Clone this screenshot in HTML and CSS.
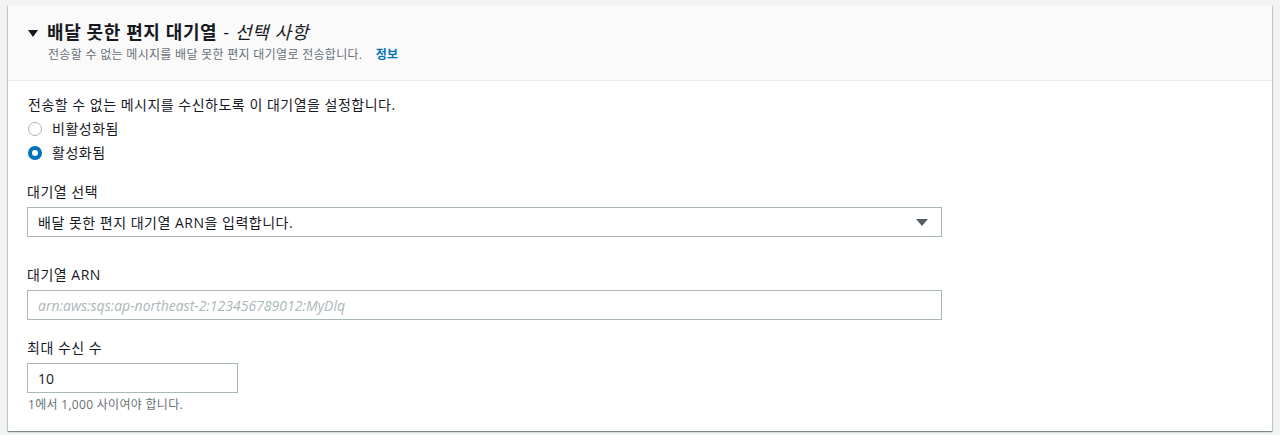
FILE: index.html
```html
<!DOCTYPE html>
<html lang="ko">
<head>
    <meta charset="utf-8">
    <title>배달 못한 편지 대기열</title>
    <link rel="stylesheet" href="styles.css">
</head>
<body>
    <div class="panel">
        <div class="panel-header">
            <h2>
                <span class="caret"></span>
                배달 못한 편지 대기열 <span class="optional">- <i>선택 사항</i></span>
            </h2>
            <p class="desc">전송할 수 없는 메시지를 배달 못한 편지 대기열로 전송합니다. <a href="#" class="info">정보</a></p>
        </div>
        <div class="panel-body">
            <p class="intro">전송할 수 없는 메시지를 수신하도록 이 대기열을 설정합니다.</p>
            <label class="radio"><span class="dot"></span>비활성화됨</label>
            <label class="radio"><span class="dot checked"></span>활성화됨</label>

            <div class="field first">
                <label class="field-label">대기열 선택</label>
                <div class="select">
                    <span>배달 못한 편지 대기열 ARN을 입력합니다.</span>
                    <span class="select-caret"></span>
                </div>
            </div>

            <div class="field arn">
                <label class="field-label">대기열 ARN</label>
                <input type="text" class="text wide" placeholder="arn:aws:sqs:ap-northeast-2:123456789012:MyDlq">
            </div>

            <div class="field count">
                <label class="field-label">최대 수신 수</label>
                <input type="text" class="text narrow" value="10">
                <p class="hint">1에서 1,000 사이여야 합니다.</p>
            </div>
        </div>
    </div>
</body>
</html>
```

FILE: styles.css
```css
body {
    margin: 0;
    padding: 5px 8px 4px 8px;
    background-color: #f2f3f3;
    font-family: "Open Sans", "Noto Sans CJK KR", sans-serif;
    font-size: 14px;
    letter-spacing: 0.5px;
    color: #16191f;
}
.panel {
    background-color: #ffffff;
    box-shadow: 0 1px 1px 0 rgba(0, 28, 36, 0.3), 1px 1px 1px 0 rgba(0, 28, 36, 0.15), -1px 1px 1px 0 rgba(0, 28, 36, 0.15);
    height: 426px;
}
.panel-header {
    background-color: #fafafa;
    border-bottom: 1px solid #eaeded;
    height: 76px;
    box-sizing: border-box;
    padding: 14px 20px 0 20px;
}
.panel-header h2 {
    margin: 0;
    font-size: 18px;
    font-weight: bold;
    letter-spacing: 0.6px;
    line-height: 26px;
    display: flex;
    align-items: center;
}
.caret {
    display: inline-block;
    width: 0;
    height: 0;
    border-left: 5px solid transparent;
    border-right: 5px solid transparent;
    border-top: 7px solid #16191f;
    margin-right: 9px;
    margin-top: 2px;
}
.optional {
    font-weight: normal;
    margin-left: 6px;
}
.optional i {
    font-style: italic;
}
.desc {
    margin: 0 0 0 20px;
    font-size: 12px;
    letter-spacing: 0.3px;
    color: #687078;
    line-height: 20px;
}
.info {
    color: #0073bb;
    font-weight: bold;
    text-decoration: none;
    margin-left: 10px;
}
.panel-body {
    padding: 12px 19px 0 19px;
}
.intro {
    margin: 0 0 0 1px;
    line-height: 24px;
}
.radio {
    display: flex;
    align-items: center;
    line-height: 24px;
    padding-left: 1px;
}
.dot {
    width: 12px;
    height: 12px;
    border: 1px solid #aab7b8;
    border-radius: 50%;
    box-sizing: content-box;
    margin-right: 10px;
    background-color: #ffffff;
}
.dot.checked {
    width: 6px;
    height: 6px;
    border: 4px solid #0073bb;
}
.field.first {
    margin-top: 16px;
}
.field.arn {
    margin-top: 27px;
}
.field.count {
    margin-top: 17px;
}
.field-label {
    display: block;
    line-height: 22px;
    margin-bottom: 4px;
}
.select {
    width: 915px;
    height: 30px;
    box-sizing: border-box;
    border: 1px solid #aab7b8;
    display: flex;
    align-items: center;
    justify-content: space-between;
    padding: 0 13px 0 10px;
}
.select-caret {
    width: 0;
    height: 0;
    border-left: 6px solid transparent;
    border-right: 6px solid transparent;
    border-top: 7px solid #545b64;
}
input.text {
    display: block;
    height: 30px;
    box-sizing: border-box;
    border: 1px solid #aab7b8;
    font-family: inherit;
    font-size: 14px;
    letter-spacing: 0;
    color: #16191f;
    padding: 0 10px;
    margin: 0;
}
input.text::placeholder {
    font-style: italic;
    color: #aab7b8;
}
.wide {
    width: 915px;
}
.narrow {
    width: 211px;
}
.hint {
    margin: 3px 0 0 1px;
    font-size: 12px;
    letter-spacing: 0.3px;
    color: #687078;
    line-height: 18px;
}
```
